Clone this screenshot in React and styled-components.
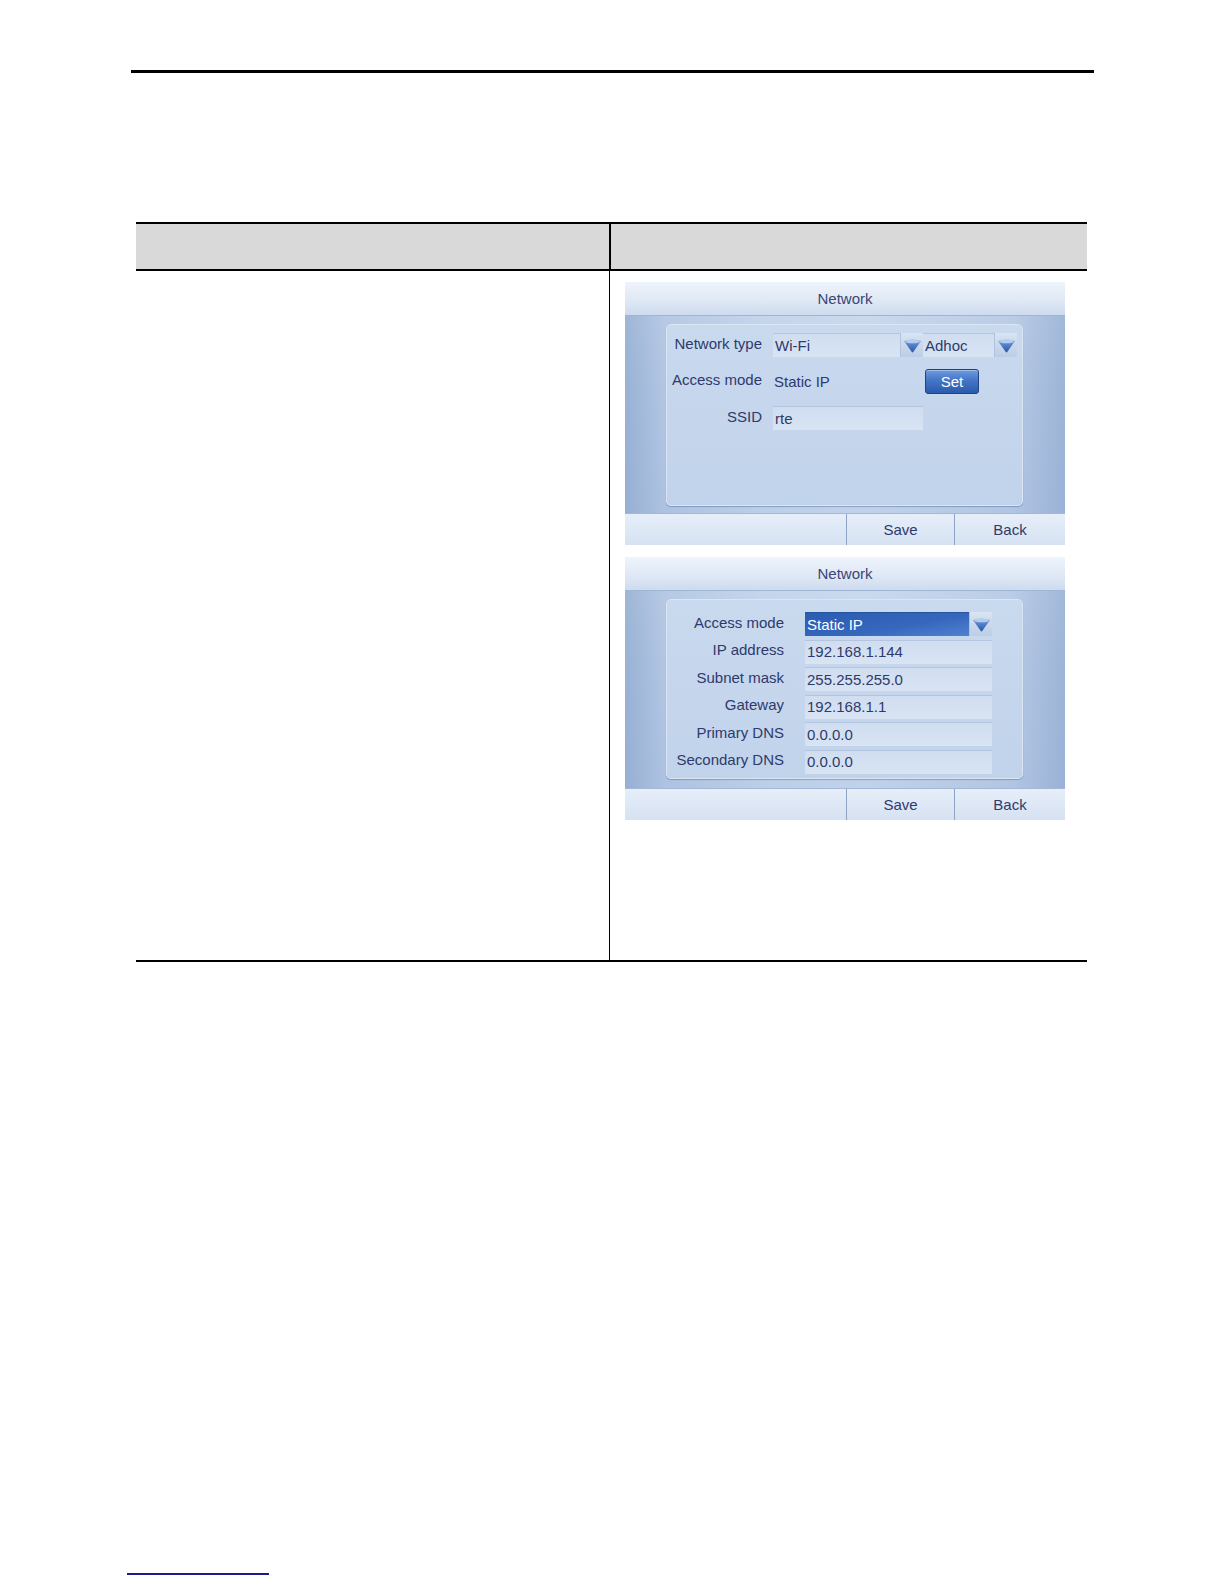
import React from "react";
import styled, { createGlobalStyle } from "styled-components";

const GlobalStyle = createGlobalStyle`
  html, body {
    margin: 0;
    padding: 0;
    background: #ffffff;
  }
  body {
    font-family: "Liberation Sans", Arial, sans-serif;
  }
  * {
    box-sizing: border-box;
  }
`;

const Page = styled.div`
  width: 1224px;
  padding: 70px 0 8px;
  overflow: hidden;
`;

const TopRule = styled.div`
  width: 963px;
  height: 3px;
  margin-left: 131px;
  background: #000;
`;

const Table = styled.div`
  width: 951px;
  margin: 149px 0 0 136px;
  border-top: 2px solid #000;
  border-bottom: 2px solid #000;
`;

const HeadRow = styled.div`
  display: grid;
  grid-template-columns: 473px 1fr;
  height: 47px;
  background: #d9d9d9;
  border-bottom: 2px solid #000;
`;

const HeadCell = styled.div`
  border-left: ${(p) => (p.$divider ? "2px solid #000" : "none")};
`;

const BodyRow = styled.div`
  display: grid;
  grid-template-columns: 473px 1fr;
  height: 689px;
`;

const BodyCell = styled.div`
  border-left: ${(p) => (p.$divider ? "1px solid #000" : "none")};
  padding: ${(p) => (p.$divider ? "11px 0 0 15px" : "0")};
  display: flex;
  flex-direction: column;
  gap: 12px;
`;

const FootLink = styled.div`
  width: 142px;
  height: 2px;
  margin: 611px 0 0 127px;
  background: #1b1b8f;
`;

/* device screen */

const Screen = styled.div`
  width: 440px;
  height: 263px;
  display: flex;
  flex-direction: column;
  color: #2e3a6c;
  font-size: 15px;
  line-height: 1;
`;

const ScreenHeader = styled.div`
  height: 34px;
  flex: none;
  display: flex;
  align-items: center;
  justify-content: center;
  background: linear-gradient(180deg, #eef4fb 0%, #dfe8f5 55%, #cedbee 100%);
  border-bottom: 1px solid #9fb5d5;
  color: #3a4676;
`;

const ScreenBody = styled.div`
  flex: 1;
  padding: ${(p) => p.$pad};
  background:
    linear-gradient(180deg, rgba(255, 255, 255, 0.06), rgba(255, 255, 255, 0) 40%, rgba(120, 150, 200, 0.08)),
    linear-gradient(90deg, #98b1d4 0%, #b2c6e3 9%, #c2d4eb 33%, #c6d7ed 55%, #b6c9e5 88%, #9cb4d7 100%);
`;

const Panel = styled.div`
  height: 100%;
  border-radius: 5px;
  border: 1px solid #dbe5f3;
  background: linear-gradient(180deg, #c9d9ee 0%, #c1d3eb 100%);
  box-shadow: 0 1px 1px rgba(70, 100, 150, 0.45);
  padding: ${(p) => p.$pad};
  display: grid;
  grid-template-columns: ${(p) => p.$cols};
  grid-auto-rows: ${(p) => p.$rowH};
  row-gap: ${(p) => p.$rowGap};
  align-items: center;
`;

const Label = styled.div`
  text-align: right;
  white-space: nowrap;
  padding-right: ${(p) => p.$gap};
  position: relative;
  top: -2px;
`;

const Value = styled.div`
  white-space: nowrap;
  padding-left: 1px;
`;

const Field = styled.div`
  height: 100%;
  display: flex;
  align-items: center;
  padding-left: 2px;
  background: ${(p) =>
    p.$active
      ? "linear-gradient(170deg, #2b5cb3 0%, #3567bd 55%, #5686d2 100%)"
      : "linear-gradient(180deg, #d0ddf0 0%, #d8e4f3 100%)"};
  color: ${(p) => (p.$active ? "#ffffff" : "inherit")};
  box-shadow: inset 0 1px 0 ${(p) => (p.$active ? "#28539f" : "#b3c5df")};
  white-space: nowrap;
`;

const FieldText = styled.span`
  flex: 1;
`;

const DropButton = styled.div`
  width: 23px;
  height: 100%;
  flex: none;
  display: flex;
  align-items: center;
  justify-content: center;
  background: linear-gradient(180deg, #d9e4f3 0%, #bccde5 100%);
  border-left: 1px solid #b0c3de;
`;

const SetButton = styled.div`
  width: 54px;
  height: 25px;
  margin-left: 2px;
  display: flex;
  align-items: center;
  justify-content: center;
  color: #fff;
  border-radius: 3px;
  border: 1px solid #1e4382;
  background: linear-gradient(180deg, #6f9ade 0%, #4475c6 45%, #2a5aab 100%);
  box-shadow: inset 0 1px 0 rgba(255, 255, 255, 0.35);
`;

const ScreenFooter = styled.div`
  height: 32px;
  flex: none;
  display: grid;
  grid-template-columns: 221px 108px 1fr;
  border-top: 1px solid #a3b8d8;
  background: linear-gradient(180deg, #e6eef9 0%, #d6e2f2 100%);
`;

const FooterCell = styled.div`
  display: flex;
  align-items: center;
  justify-content: center;
  border-left: ${(p) => (p.$sep ? "1px solid #8ea4c6" : "none")};
`;

function DropIcon() {
  return (
    <svg width="19" height="15" viewBox="0 0 19 15">
      <defs>
        <linearGradient id="cone" x1="0" y1="0" x2="0" y2="1">
          <stop offset="0" stopColor="#88abe0" />
          <stop offset="0.4" stopColor="#5482cc" />
          <stop offset="1" stopColor="#2a56a4" />
        </linearGradient>
      </defs>
      <path d="M1 3 Q9.5 0 18 3 L10.4 13.8 Q9.5 15 8.6 13.8 Z" fill="url(#cone)" />
      <ellipse cx="9.5" cy="3.4" rx="7.4" ry="1.8" fill="#bcd1f1" opacity="0.9" />
    </svg>
  );
}

function NetworkScreen({ pad, children }) {
  return (
    <Screen>
      <ScreenHeader>Network</ScreenHeader>
      <ScreenBody $pad={pad}>{children}</ScreenBody>
      <ScreenFooter>
        <FooterCell />
        <FooterCell $sep>Save</FooterCell>
        <FooterCell $sep>Back</FooterCell>
      </ScreenFooter>
    </Screen>
  );
}

const ipRows = [
  ["IP address", "192.168.1.144"],
  ["Subnet mask", "255.255.255.0"],
  ["Gateway", "192.168.1.1"],
  ["Primary DNS", "0.0.0.0"],
  ["Secondary DNS", "0.0.0.0"],
];

export default function App() {
  return (
    <>
      <GlobalStyle />
      <Page>
        <TopRule />
        <Table>
          <HeadRow>
            <HeadCell />
            <HeadCell $divider />
          </HeadRow>
          <BodyRow>
            <BodyCell />
            <BodyCell $divider>
              <NetworkScreen pad="8px 42px 7px 41px">
                <Panel
                  $pad="8px 0 0 0"
                  $cols="106px 150px 94px"
                  $rowH="24px"
                  $rowGap="12.5px"
                >
                  <Label $gap="11px">Network type</Label>
                  <Field>
                    <FieldText>Wi-Fi</FieldText>
                    <DropButton>
                      <DropIcon />
                    </DropButton>
                  </Field>
                  <Field>
                    <FieldText>Adhoc</FieldText>
                    <DropButton>
                      <DropIcon />
                    </DropButton>
                  </Field>

                  <Label $gap="11px">Access mode</Label>
                  <Value>Static IP</Value>
                  <SetButton>Set</SetButton>

                  <Label $gap="11px">SSID</Label>
                  <Field>
                    <FieldText>rte</FieldText>
                  </Field>
                </Panel>
              </NetworkScreen>

              <NetworkScreen pad="8px 42px 9px 41px">
                <Panel
                  $pad="12px 0 0 0"
                  $cols="138px 187px"
                  $rowH="24px"
                  $rowGap="3.6px"
                >
                  <Label $gap="21px">Access mode</Label>
                  <Field $active>
                    <FieldText>Static IP</FieldText>
                    <DropButton>
                      <DropIcon />
                    </DropButton>
                  </Field>
                  {ipRows.map(([label, value]) => (
                    <React.Fragment key={label}>
                      <Label $gap="21px">{label}</Label>
                      <Field>
                        <FieldText>{value}</FieldText>
                      </Field>
                    </React.Fragment>
                  ))}
                </Panel>
              </NetworkScreen>
            </BodyCell>
          </BodyRow>
        </Table>
        <FootLink />
      </Page>
    </>
  );
}
